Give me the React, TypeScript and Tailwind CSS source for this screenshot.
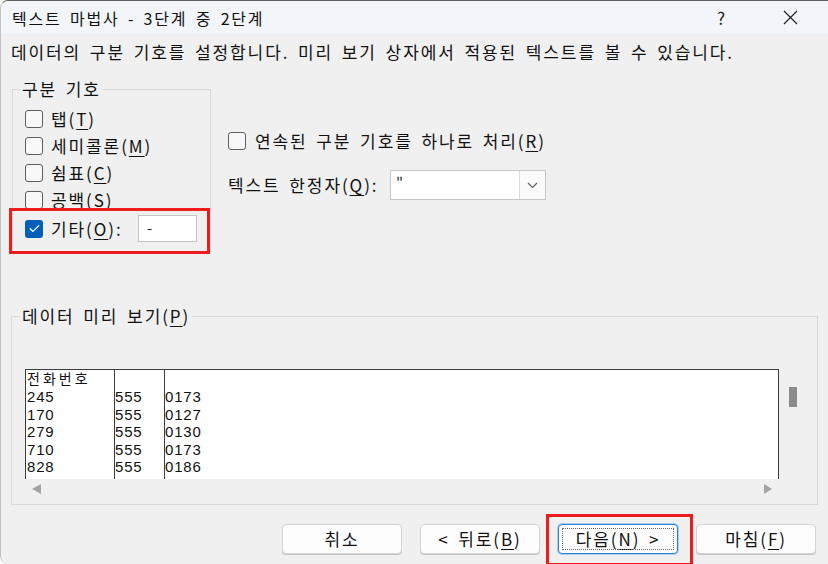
import React from 'react'

// 텍스트 마법사 (3단계 중 2단계) 다이얼로그
const txt = "text-[17px] tracking-[1.9px] [word-spacing:3px] text-[#111]"

function Key({ k }: { k: string }) {
  return (
    <>
      (<span className="underline underline-offset-[3px] decoration-1">{k}</span>)
    </>
  )
}

function Check({ checked = false }: { checked?: boolean }) {
  if (checked) {
    return (
      <span className="w-[18px] h-[18px] shrink-0 rounded-[3px] bg-[#005fb8] flex items-center justify-center">
        <svg width="11" height="9" viewBox="0 0 11 9">
          <path d="M1.2 4.8 L4 7.4 L9.8 1.6" stroke="white" strokeWidth="1.3" fill="none" strokeLinecap="round" strokeLinejoin="round" />
        </svg>
      </span>
    )
  }
  return <span className="w-[18px] h-[18px] shrink-0 rounded-[3px] border border-[#5f5f5f] bg-[#f8f8f8]" />
}

function Button({ children, focused = false }: { children: React.ReactNode; focused?: boolean }) {
  return (
    <button
      type="button"
      className={
        focused
          ? "relative w-[120px] h-[30px] rounded-[4px] bg-[#fdfdfd] border border-[#2f7fd6] shadow-[0_0_0_1px_#a9cdf3] flex items-center justify-center " + txt
          : "relative w-[120px] h-[30px] rounded-[4px] bg-[#fdfdfd] border border-[#d3d3d3] shadow-[0_1px_0_#c4c4c4] flex items-center justify-center " + txt
      }
    >
      {focused && <span className="absolute inset-[3px] border border-dotted border-[#666]" />}
      {children}
    </button>
  )
}

const rows = [
  ['전화번호', '', ''],
  ['245', '555', '0173'],
  ['170', '555', '0127'],
  ['279', '555', '0130'],
  ['710', '555', '0173'],
  ['828', '555', '0186'],
]

export default function App() {
  return (
    <div className="relative w-[828px] h-[564px] overflow-hidden bg-[#f0f0f0] border-t border-t-[#5e5e5e] border-l border-l-[#c2c2c2] rounded-tl-[8px] rounded-bl-[8px] font-['Noto_Sans_CJK_KR','Noto_Sans',sans-serif] flex flex-col">
      {/* 타이틀 바 */}
      <div className="h-[33px] shrink-0 bg-[#f2f5fa] flex items-center pl-[11px] pr-[15px]">
        <span className="text-[16px] tracking-[1.8px] [word-spacing:3px] text-[#111]">텍스트 마법사 - 3단계 중 2단계</span>
        <div className="ml-auto flex items-center">
          <span className="w-[46px] text-center text-[17px] text-[#222] mr-[23px]">?</span>
          <span className="w-[46px] flex justify-center">
            <svg width="15" height="15" viewBox="0 0 15 15">
              <path d="M1 1 L14 14 M14 1 L1 14" stroke="#222" strokeWidth="1.2" />
            </svg>
          </span>
        </div>
      </div>

      {/* 설명 */}
      <div className={"pl-[10px] pt-[8px] leading-[20px] " + txt}>
        데이터의 구분 기호를 설정합니다. 미리 보기 상자에서 적용된 텍스트를 볼 수 있습니다.
      </div>

      {/* 구분 기호 + 옵션 */}
      <div className="flex items-start mt-[16px]">
        <fieldset className="ml-[11px] w-[199px] border border-[#d9d9d9]">
          <legend className={"ml-[7px] px-[2px] leading-[22px] " + txt}>구분 기호</legend>
          <div className="pl-[12px] pt-[5px] pb-[9px] pr-[13px]">
            <div className="h-[27px] flex items-center gap-[8px]">
              <Check />
              <span className={txt}>탭<Key k="T" /></span>
            </div>
            <div className="h-[27px] flex items-center gap-[8px]">
              <Check />
              <span className={txt}>세미콜론<Key k="M" /></span>
            </div>
            <div className="h-[27px] flex items-center gap-[8px]">
              <Check />
              <span className={txt}>쉼표<Key k="C" /></span>
            </div>
            <div className="h-[27px] flex items-center gap-[8px]">
              <Check />
              <span className={txt}>공백<Key k="S" /></span>
            </div>
            <div className="h-[27px] mt-[2px] flex items-center gap-[8px]">
              <Check checked />
              <span className={txt}>기타<Key k="O" />:</span>
              <div className="ml-auto w-[59px] h-[27px] bg-white border border-[#c3c3c3] flex items-center pl-[8px] text-[15px] text-[#222]">-</div>
            </div>
          </div>
        </fieldset>

        <div className="ml-[17px] flex flex-col">
          <div className="mt-[51px] h-[24px] flex items-center gap-[9px]">
            <Check />
            <span className={txt}>연속된 구분 기호를 하나로 처리<Key k="R" /></span>
          </div>
          <div className="mt-[17px] h-[30px] flex items-center">
            <span className={"w-[162px] " + txt}>텍스트 한정자<Key k="Q" />:</span>
            <div className="w-[156px] h-[30px] bg-white border border-[#c6c6c6] flex">
              <div className="flex-1 pl-[5px] pt-[1px] text-[15px] leading-[20px] text-[#333]">"</div>
              <div className="w-[26px] border-l border-[#dcdcdc] bg-[#fafafa] flex items-center justify-center">
                <svg width="11" height="7" viewBox="0 0 11 7">
                  <path d="M1 1 L5.5 5.5 L10 1" stroke="#606060" strokeWidth="1.1" fill="none" />
                </svg>
              </div>
            </div>
          </div>
        </div>
      </div>

      {/* 데이터 미리 보기 */}
      <fieldset className="ml-[10px] mt-[53px] w-[807px] border border-[#d9d9d9]">
        <legend className={"ml-[8px] px-[2px] leading-[22px] " + txt}>
          데이터 미리 보기<Key k="P" />
        </legend>
        <div className="pt-[42px] pb-[5px] pl-[13px]">
          <div className="flex items-start">
            <div className="w-[754px] h-[110px] bg-white border-t border-l border-r border-[#3c3c3c] flex font-['Liberation_Sans','Noto_Sans_CJK_KR',sans-serif] text-[15px] tracking-[0.8px] leading-[17.4px] text-[#111] overflow-hidden">
              {[0, 1, 2].map((c) => (
                <div
                  key={c}
                  className={
                    c === 0
                      ? "w-[89px] border-r border-[#3c3c3c] pl-[1px] pt-[1px]"
                      : c === 1
                      ? "w-[50px] border-r border-[#3c3c3c] pt-[1px]"
                      : "flex-1 pt-[1px]"
                  }
                >
                  {rows.map((r, i) => (
                    <div key={i} className={i === 0 ? "h-[17.4px] whitespace-nowrap tracking-[3px] text-[14px]" : "h-[17.4px] whitespace-nowrap"}>
                      {r[c]}
                    </div>
                  ))}
                </div>
              ))}
            </div>
            <div className="ml-[10px] mt-[18px] w-[8px] h-[20px] bg-[#8b8b8b]" />
          </div>
          <div className="w-[754px] h-[20px] px-[7px] flex items-center justify-between">
            <svg width="9" height="10" viewBox="0 0 9 10">
              <path d="M9 0 L0 5 L9 10 Z" fill="#a3a3a3" />
            </svg>
            <svg width="8" height="10" viewBox="0 0 8 10">
              <path d="M0 0 L8 5 L0 10 Z" fill="#a3a3a3" />
            </svg>
          </div>
        </div>
      </fieldset>

      {/* 버튼 */}
      <div className="mt-[19px] pl-[281px] flex gap-[18px]">
        <Button>취소</Button>
        <Button>&lt; 뒤로<Key k="B" /></Button>
        <Button focused>다음<Key k="N" /> &gt;</Button>
        <Button>마침<Key k="F" /></Button>
      </div>

      {/* 강조 표시 */}
      <div className="absolute left-[8px] top-[207px] w-[201px] h-[46px] border-[3px] border-[#ee1c1c]" />
      <div className="absolute left-[545px] top-[513px] w-[147px] h-[52px] border-[3px] border-[#ee1c1c]" />
    </div>
  )
}
